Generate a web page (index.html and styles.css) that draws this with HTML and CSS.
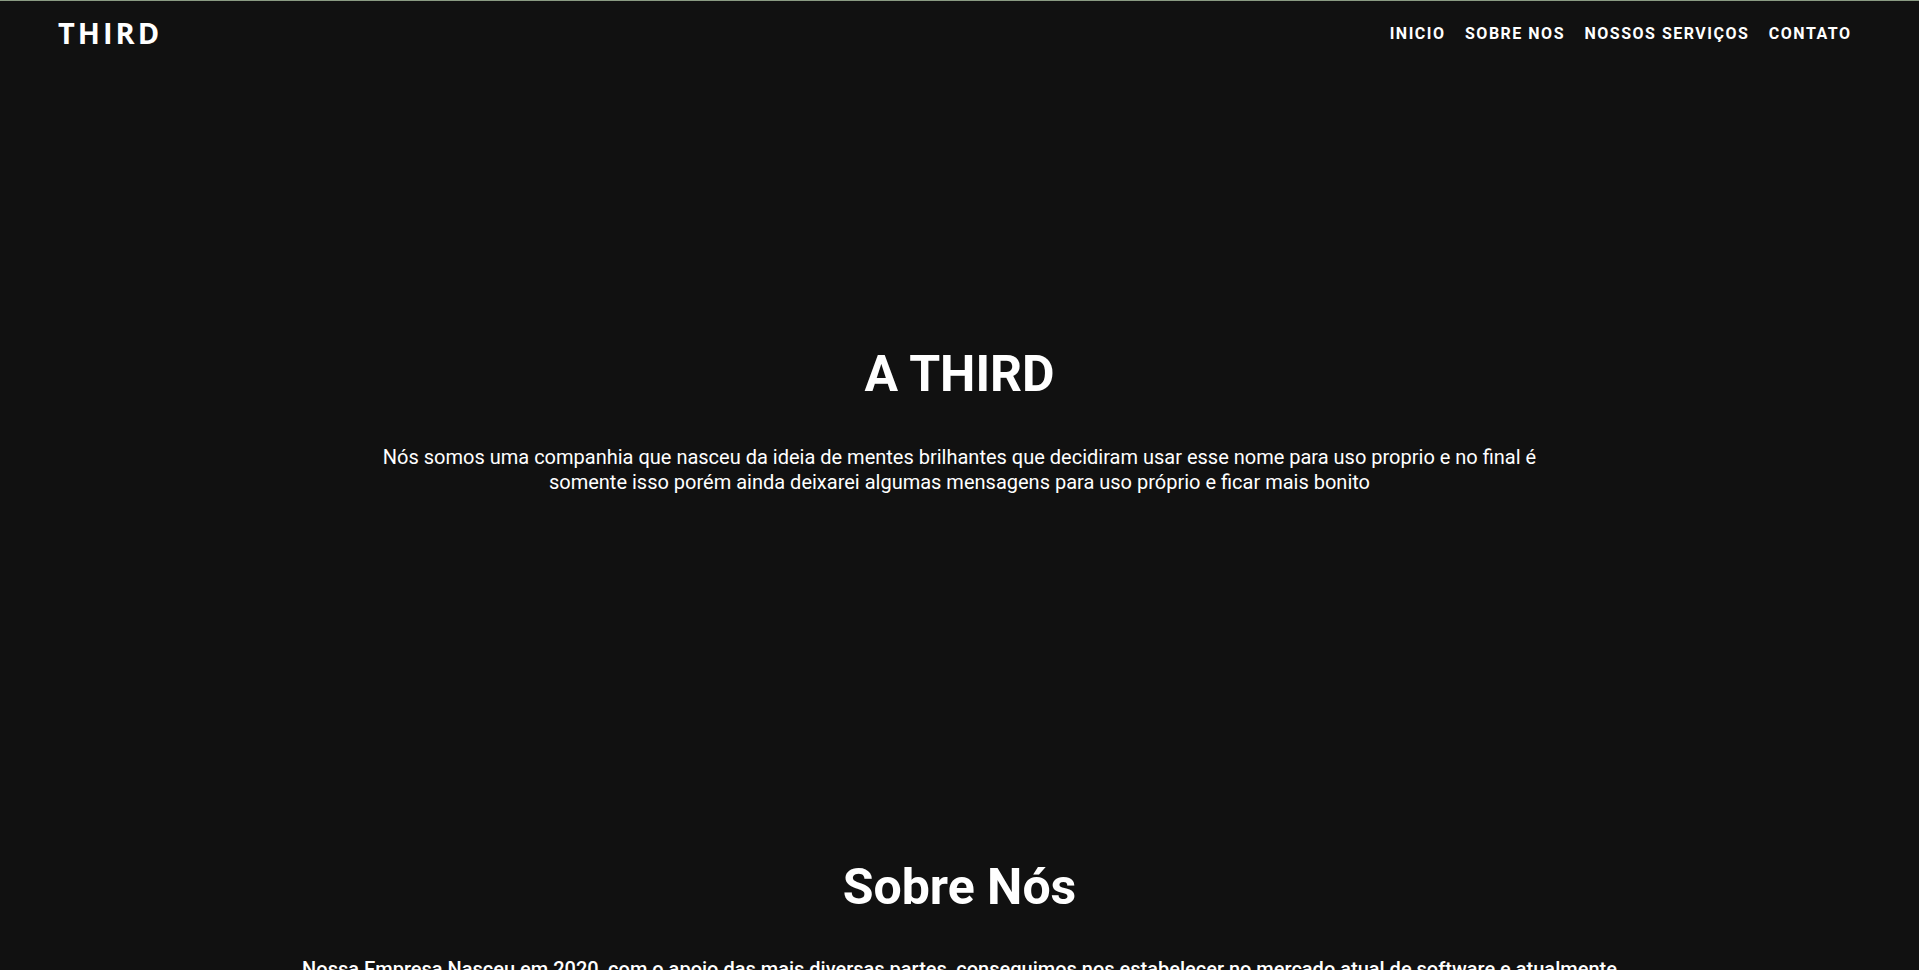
FILE: index.html
```html
<!DOCTYPE html>
<html lang="pt-BR">
<head>
<meta charset="utf-8">
<title>Third</title>
<link rel="stylesheet" href="styles.css">
</head>
<body>
<header class="topbar">
  <a class="logo" href="#">THIRD</a>
  <nav class="menu">
    <a href="#">INICIO</a>
    <a href="#">SOBRE NOS</a>
    <a href="#">NOSSOS SERVIÇOS</a>
    <a href="#">CONTATO</a>
  </nav>
</header>
<main>
  <section class="hero">
    <h1 class="hero-title">A THIRD</h1>
    <p class="hero-text">Nós somos uma companhia que nasceu da ideia de mentes brilhantes que decidiram usar esse nome para uso proprio e no final é somente isso porém ainda deixarei algumas mensagens para uso próprio e ficar mais bonito</p>
  </section>
  <section class="about">
    <h2 class="about-title">Sobre Nós</h2>
    <p class="about-text">Nossa Empresa Nasceu em 2020, com o apoio das mais diversas partes, conseguimos nos estabelecer no mercado atual de software e atualmente somos referência em qualidade, atendimento e inovação para nossos clientes.</p>
  </section>
</main>
</body>
</html>
```

FILE: styles.css
```css
* { box-sizing: border-box; }

html, body {
  margin: 0;
  padding: 0;
  background: #111111;
  color: #ffffff;
  font-family: Roboto, "Liberation Sans", sans-serif;
}

body {
  border-top: 1px solid #8a9b83;
}

.topbar {
  display: flex;
  justify-content: space-between;
  align-items: center;
  height: 65px;
  padding: 0 69px 0 58px;
}

.logo {
  font-family: "Open Sans", Roboto, sans-serif;
  font-weight: 700;
  font-size: 29px;
  letter-spacing: 3px;
  color: #ffffff;
  text-decoration: none;
  margin-top: -2px;
}

.menu {
  display: flex;
  gap: 21px;
}

.menu a {
  color: #ffffff;
  text-decoration: none;
  font-weight: 700;
  font-size: 16px;
  letter-spacing: 1.5px;
  margin-right: -1.5px;
}

.hero {
  padding-top: 278px;
  display: flex;
  flex-direction: column;
  align-items: center;
  text-align: center;
}

.hero-title {
  margin: 0;
  font-size: 50px;
  line-height: 60px;
  font-weight: 700;
}

.hero-text {
  margin: 41px 0 0;
  width: 1180px;
  font-size: 20px;
  line-height: 24.5px;
  font-weight: 400;
}

.about {
  padding-top: 363px;
  display: flex;
  flex-direction: column;
  align-items: center;
  text-align: center;
}

.about-title {
  margin: 0;
  font-size: 50px;
  line-height: 60px;
  font-weight: 700;
}

.about-text {
  margin: 40px 0 0;
  width: 1330px;
  font-size: 20px;
  line-height: 24.5px;
  font-weight: 500;
}
```
